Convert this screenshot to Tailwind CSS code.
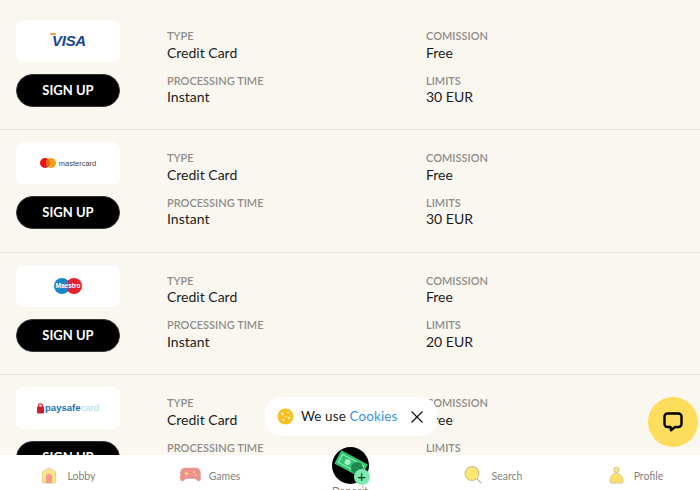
<!DOCTYPE html>
<html lang="en">
<head>
    <meta charset="UTF-8">
    <title>Payments</title>
    <script src="https://cdn.jsdelivr.net/npm/@tailwindcss/browser@4"></script>
</head>
<body class="bg-[#faf7f0] h-screen overflow-hidden flex flex-col font-['Lato',sans-serif] text-[#1c1c1c]">
    <!-- Payment rows -->
    <main class="flex-1 min-h-0 overflow-hidden pt-2">
        <section class="h-[122.4px] border-b border-[#e8e5de] pl-4 pr-[15px] pt-3 flex">
            <div class="w-[104px] mr-[47px] shrink-0">
                <div class="h-[42px] bg-white rounded-lg flex items-center justify-center pl-[2px]">
                    <span class="relative font-['Liberation_Sans',sans-serif] italic font-bold text-[15px] tracking-[-0.3px] text-[#17428c]">VISA<i class="absolute left-[-2px] top-[3px] w-[6px] h-[2px] bg-[#e8a33d] rounded-sm"></i></span>
                </div>
                <button class="mt-3 w-full h-[33px] bg-black border border-[#333] rounded-full text-white text-[13px] font-bold">SIGN UP</button>
            </div>
            <div class="flex-1 grid grid-cols-2 content-start pt-[9px] gap-y-[12px]">
                <div><p class="text-[11px] leading-[13px] font-semibold text-[#8f8d89]">TYPE</p><p class="text-[14px] leading-[18px] mt-[1.5px]">Credit Card</p></div>
                <div><p class="text-[11px] leading-[13px] font-semibold text-[#8f8d89]">COMISSION</p><p class="text-[14px] leading-[18px] mt-[1.5px]">Free</p></div>
                <div><p class="text-[11px] leading-[13px] font-semibold text-[#8f8d89]">PROCESSING TIME</p><p class="text-[14px] leading-[18px] mt-[1.5px]">Instant</p></div>
                <div><p class="text-[11px] leading-[13px] font-semibold text-[#8f8d89]">LIMITS</p><p class="text-[14px] leading-[18px] mt-[1.5px]">30 EUR</p></div>
            </div>
        </section>

        <section class="h-[122.4px] border-b border-[#e8e5de] pl-4 pr-[15px] pt-3 flex">
            <div class="w-[104px] mr-[47px] shrink-0">
                <div class="h-[42px] bg-white rounded-lg flex items-center justify-center gap-[3px]">
                    <svg width="16" height="10" viewBox="0 0 16 10"><circle cx="5" cy="5" r="5" fill="#e8121c"/><circle cx="11" cy="5" r="5" fill="#f79e1b"/><path d="M8 1a5 5 0 0 1 0 8a5 5 0 0 1 0-8z" fill="#f4640f"/></svg>
                    <span class="text-[7.5px] text-[#444] font-['Liberation_Sans',sans-serif]">mastercard</span>
                </div>
                <button class="mt-3 w-full h-[33px] bg-black border border-[#333] rounded-full text-white text-[13px] font-bold">SIGN UP</button>
            </div>
            <div class="flex-1 grid grid-cols-2 content-start pt-[9px] gap-y-[12px]">
                <div><p class="text-[11px] leading-[13px] font-semibold text-[#8f8d89]">TYPE</p><p class="text-[14px] leading-[18px] mt-[1.5px]">Credit Card</p></div>
                <div><p class="text-[11px] leading-[13px] font-semibold text-[#8f8d89]">COMISSION</p><p class="text-[14px] leading-[18px] mt-[1.5px]">Free</p></div>
                <div><p class="text-[11px] leading-[13px] font-semibold text-[#8f8d89]">PROCESSING TIME</p><p class="text-[14px] leading-[18px] mt-[1.5px]">Instant</p></div>
                <div><p class="text-[11px] leading-[13px] font-semibold text-[#8f8d89]">LIMITS</p><p class="text-[14px] leading-[18px] mt-[1.5px]">30 EUR</p></div>
            </div>
        </section>

        <section class="h-[122.4px] border-b border-[#e8e5de] pl-4 pr-[15px] pt-3 flex">
            <div class="w-[104px] mr-[47px] shrink-0">
                <div class="h-[42px] bg-white rounded-lg flex items-center justify-center">
                    <span class="relative w-[28px] h-4 flex items-center justify-center">
                        <svg class="absolute inset-0" width="28" height="16" viewBox="0 0 28 16"><circle cx="8" cy="8" r="8" fill="#1b87c9"/><circle cx="20" cy="8" r="8" fill="#e5202e"/><path d="M14 2.700a8 8 0 0 1 0 10.600a8 8 0 0 1 0-10.600z" fill="#6c5aa0"/></svg>
                        <span class="relative text-[6.5px] font-bold text-white font-['Liberation_Sans',sans-serif]">Maestro</span>
                    </span>
                </div>
                <button class="mt-3 w-full h-[33px] bg-black border border-[#333] rounded-full text-white text-[13px] font-bold">SIGN UP</button>
            </div>
            <div class="flex-1 grid grid-cols-2 content-start pt-[9px] gap-y-[12px]">
                <div><p class="text-[11px] leading-[13px] font-semibold text-[#8f8d89]">TYPE</p><p class="text-[14px] leading-[18px] mt-[1.5px]">Credit Card</p></div>
                <div><p class="text-[11px] leading-[13px] font-semibold text-[#8f8d89]">COMISSION</p><p class="text-[14px] leading-[18px] mt-[1.5px]">Free</p></div>
                <div><p class="text-[11px] leading-[13px] font-semibold text-[#8f8d89]">PROCESSING TIME</p><p class="text-[14px] leading-[18px] mt-[1.5px]">Instant</p></div>
                <div><p class="text-[11px] leading-[13px] font-semibold text-[#8f8d89]">LIMITS</p><p class="text-[14px] leading-[18px] mt-[1.5px]">20 EUR</p></div>
            </div>
        </section>

        <section class="h-[122.4px] pl-4 pr-[15px] pt-3 flex">
            <div class="w-[104px] mr-[47px] shrink-0">
                <div class="h-[42px] bg-white rounded-lg flex items-center justify-center gap-[1px]">
                    <svg width="7" height="11" viewBox="0 0 7 11"><path d="M1.500 4V2.800a2 2 0 0 1 4 0V4" fill="none" stroke="#c4202c" stroke-width="1.200"/><rect y="3.600" width="7" height="7" rx="1" fill="#c4202c"/></svg>
                    <span class="text-[9.5px] font-bold text-[#1a6fb0] font-['Liberation_Sans',sans-serif]">paysafe<span class="font-normal text-[#b3d3ea]">card</span></span>
                </div>
                <button class="mt-3 w-full h-[33px] bg-black border border-[#333] rounded-full text-white text-[13px] font-bold">SIGN UP</button>
            </div>
            <div class="flex-1 grid grid-cols-2 content-start pt-[9px] gap-y-[12px]">
                <div><p class="text-[11px] leading-[13px] font-semibold text-[#8f8d89]">TYPE</p><p class="text-[14px] leading-[18px] mt-[1.5px]">Credit Card</p></div>
                <div><p class="text-[11px] leading-[13px] font-semibold text-[#8f8d89]">COMISSION</p><p class="text-[14px] leading-[18px] mt-[1.5px]">Free</p></div>
                <div><p class="text-[11px] leading-[13px] font-semibold text-[#8f8d89]">PROCESSING TIME</p></div>
                <div><p class="text-[11px] leading-[13px] font-semibold text-[#8f8d89]">LIMITS</p></div>
            </div>
        </section>
    </main>

    <!-- Bottom nav -->
    <nav class="relative z-10 h-[35px] shrink-0 bg-white grid grid-cols-5 grid-rows-[35px] text-[10.5px] text-[#85827d]">
        <a class="flex items-center justify-center gap-[11px] pr-[4px] pt-[5px]">
            <svg width="16" height="17" viewBox="0 0 18 19"><path d="M9 1 16.500 5.500v11a1.500 1.500 0 0 1-1.500 1.500H3a1.500 1.500 0 0 1-1.500-1.500V5.500z" fill="#fde68a" stroke="#d9c98c"/><path d="M5.500 18v-7a3.500 3.500 0 0 1 7 0v7z" fill="#f59b8b"/></svg>
            <span class="mt-1">Lobby</span>
        </a>
        <a class="flex items-center justify-center gap-2 pt-[5px]">
            <svg width="21" height="16" viewBox="0 0 21 16"><path d="M5 1h11c2.500 0 4 1.500 4.300 4l.5 6.500c.1 2-2 3.300-3.500 2L15 11.500H6l-2.300 2c-1.500 1.300-3.600 0-3.500-2L.700 5C1 2.500 2.500 1 5 1z" fill="#f08f8f" stroke="#d9a9a0" stroke-width=".6"/><path d="M4.500 6.500h4M6.500 4.500v4" stroke="#ffe27a" stroke-width="1.200"/><circle cx="14" cy="5" r="1" fill="#ffe27a"/><circle cx="16" cy="8" r="1" fill="#ffe27a"/></svg>
            <span class="mt-1">Games</span>
        </a>
        <a class="relative flex flex-col items-center">
            <span class="relative -mt-2 w-[37px] h-[37px] rounded-full bg-black shrink-0">
                <svg class="absolute inset-0 rounded-full" width="37" height="37" viewBox="0 0 37 37"><g transform="rotate(28 18 17)"><rect x="4" y="9" width="30" height="15" fill="#2fc46f"/><rect x="7" y="12" width="24" height="9" fill="none" stroke="#a7efc4"/><circle cx="15" cy="16.500" r="3" fill="#a7efc4"/></g><circle cx="25" cy="21" r="6" fill="#1e8a4e"/></svg>
                <span class="absolute right-[-1px] bottom-[-1px] w-4 h-4 rounded-full bg-[#7fe8b0] text-[#0c3b22] text-[15px] leading-[15px] text-center">+</span>
            </span>
            <span class="leading-[13px] mt-[1px]">Deposit</span>
        </a>
        <a class="flex items-center justify-center gap-[10px] pl-[6px] pt-[5px]">
            <svg width="18" height="18" viewBox="0 0 19 19"><circle cx="8.500" cy="8" r="7.300" fill="#fde872" stroke="#cdbf8a" stroke-width="1.200"/><path d="M13.800 13.500 18 18" stroke="#a8a69f" stroke-width="1.200"/></svg>
            <span class="mt-1">Search</span>
        </a>
        <a class="flex items-center justify-center gap-[10px] pl-[12px] pt-[5px]">
            <svg width="15" height="18" viewBox="0 0 16 18"><circle cx="8" cy="3.500" r="2.800" fill="#fde68a" stroke="#cdbf8a"/><path d="M1 16c0-5 3-9 7-9s7 4 7 9c0 1-.5 1.500-1.500 1.500h-11C1.500 17.500 1 17 1 16z" fill="#fde068" stroke="#cdbf8a"/></svg>
            <span class="mt-1">Profile</span>
        </a>
    </nav>

    <!-- Cookie bubble -->
    <div class="fixed z-20 left-[265px] top-[397px] w-[172px] h-[39px] bg-white rounded-2xl flex items-center pl-3">
        <svg width="17" height="17" viewBox="0 0 17 17"><circle cx="8.500" cy="8.500" r="8" fill="#fbbf24"/><circle cx="5.500" cy="6" r="1.300" fill="#fff3c4"/><circle cx="11" cy="4.500" r="1" fill="#fff3c4"/><circle cx="12" cy="10" r="1.300" fill="#fff3c4"/><circle cx="6.500" cy="12" r="1.200" fill="#fff3c4"/><circle cx="8.500" cy="8.500" r=".8" fill="#fff3c4"/></svg>
        <span class="ml-[7px] text-[13.5px] tracking-[0.1px] text-[#222]">We use <span class="text-[#3b93d6]">Cookies</span></span>
        <svg class="absolute left-[146px] top-[14px]" width="12" height="12" viewBox="0 0 12 12"><path d="M.5.500l11 11M11.500.500l-11 11" stroke="#111" stroke-width="1.200"/></svg>
    </div>

    <!-- Chat widget -->
    <button class="fixed z-20 left-[648px] top-[397px] w-[50px] h-[50px] rounded-full bg-[#fedd5c] flex items-center justify-center">
        <svg width="20" height="20" viewBox="0 0 20 20"><path d="M4.500 1.500h11a3 3 0 0 1 3 3v7.500a3 3 0 0 1-3 3h-3.500L8 18.300l-.500-3.300h-3a3 3 0 0 1-3-3V4.500a3 3 0 0 1 3-3z" fill="none" stroke="#000" stroke-width="2.400" stroke-linejoin="round"/></svg>
    </button>
</body>
</html>
